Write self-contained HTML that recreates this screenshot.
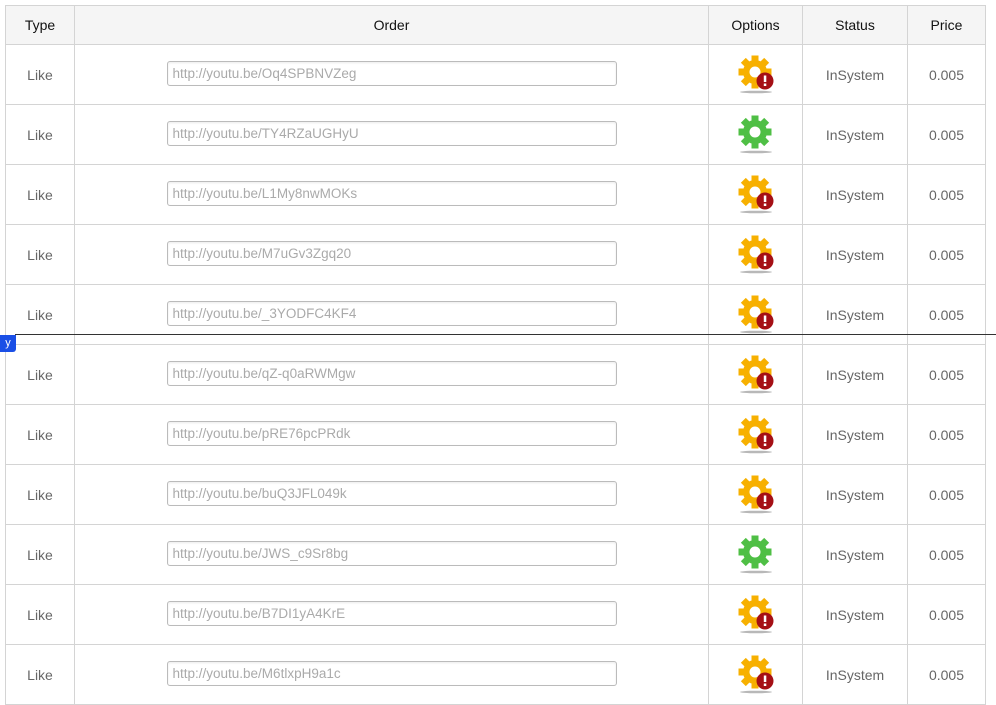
<!DOCTYPE html>
<html><head><meta charset="utf-8"><style>
body{margin:0;width:996px;height:698px;overflow:hidden;background:#fff;font-family:"Liberation Sans",Arial,sans-serif;position:relative}
table{position:absolute;left:5px;top:5px;border-collapse:collapse;table-layout:fixed;width:980px}
td,th{border:1px solid #d4d4d4;text-align:center;padding:0}
th{background:#f5f5f5;font-weight:normal;font-size:14px;color:#111;height:38px}
td{height:59px;font-size:14px;color:#666}
.inp{display:block;margin:-2px auto 0;text-align:left;font-size:13.5px;color:#aaa;line-height:23px;padding-left:5px;box-sizing:border-box;width:450px;height:25px;border:1px solid #bbb;border-radius:3px;box-shadow:inset 0 1px 2px rgba(0,0,0,.08)}
.hl{position:absolute;left:15px;right:0;top:334px;height:1px;background:#333}
.tag{position:absolute;left:0;top:335px;width:16px;height:17px;background:#1a4fe6;color:#fff;font-size:11px;line-height:17px;border-radius:0 0 3px 0;text-align:center}
svg{display:block;margin:0 auto}
</style></head><body>
<svg width="0" height="0" style="position:absolute"><defs>
<g id="teeth"><circle cx="0" cy="0" r="12"/><rect x="-3.5" y="-16.5" width="7" height="33"/><rect x="-3.5" y="-16.5" width="7" height="33" transform="rotate(45)"/><rect x="-3.5" y="-16.5" width="7" height="33" transform="rotate(90)"/><rect x="-3.5" y="-16.5" width="7" height="33" transform="rotate(135)"/></g>
<g id="gy"><ellipse cx="19" cy="37" rx="16" ry="1.3" fill="#888" opacity=".6"/><g transform="translate(18,17)" fill="#f7b000"><use href="#teeth"/><circle r="5.5" fill="#fff"/></g><circle cx="28" cy="26" r="8.5" fill="#a50f15"/><rect x="26.8" y="20.5" width="2.5" height="6.5" fill="#fff"/><rect x="26.8" y="28.5" width="2.5" height="2.5" fill="#fff"/></g>
<g id="gg"><ellipse cx="19" cy="37" rx="16" ry="1.3" fill="#888" opacity=".6"/><g transform="translate(18,17)" fill="#4fbf45"><use href="#teeth"/><circle r="5.5" fill="#fff"/></g></g>
</defs></svg>
<table>
<colgroup><col style="width:69px"><col style="width:634px"><col style="width:94px"><col style="width:105px"><col style="width:78px"></colgroup>
<tr><th>Type</th><th>Order</th><th>Options</th><th>Status</th><th>Price</th></tr>
<tr><td>Like</td><td><div class="inp">http://youtu.be/Oq4SPBNVZeg</div></td><td><svg width="38" height="40"><use href="#gy"/></svg></td><td>InSystem</td><td>0.005</td></tr>
<tr><td>Like</td><td><div class="inp">http://youtu.be/TY4RZaUGHyU</div></td><td><svg width="38" height="40"><use href="#gg"/></svg></td><td>InSystem</td><td>0.005</td></tr>
<tr><td>Like</td><td><div class="inp">http://youtu.be/L1My8nwMOKs</div></td><td><svg width="38" height="40"><use href="#gy"/></svg></td><td>InSystem</td><td>0.005</td></tr>
<tr><td>Like</td><td><div class="inp">http://youtu.be/M7uGv3Zgq20</div></td><td><svg width="38" height="40"><use href="#gy"/></svg></td><td>InSystem</td><td>0.005</td></tr>
<tr><td>Like</td><td><div class="inp">http://youtu.be/_3YODFC4KF4</div></td><td><svg width="38" height="40"><use href="#gy"/></svg></td><td>InSystem</td><td>0.005</td></tr>
<tr><td>Like</td><td><div class="inp">http://youtu.be/qZ-q0aRWMgw</div></td><td><svg width="38" height="40"><use href="#gy"/></svg></td><td>InSystem</td><td>0.005</td></tr>
<tr><td>Like</td><td><div class="inp">http://youtu.be/pRE76pcPRdk</div></td><td><svg width="38" height="40"><use href="#gy"/></svg></td><td>InSystem</td><td>0.005</td></tr>
<tr><td>Like</td><td><div class="inp">http://youtu.be/buQ3JFL049k</div></td><td><svg width="38" height="40"><use href="#gy"/></svg></td><td>InSystem</td><td>0.005</td></tr>
<tr><td>Like</td><td><div class="inp">http://youtu.be/JWS_c9Sr8bg</div></td><td><svg width="38" height="40"><use href="#gg"/></svg></td><td>InSystem</td><td>0.005</td></tr>
<tr><td>Like</td><td><div class="inp">http://youtu.be/B7DI1yA4KrE</div></td><td><svg width="38" height="40"><use href="#gy"/></svg></td><td>InSystem</td><td>0.005</td></tr>
<tr><td>Like</td><td><div class="inp">http://youtu.be/M6tlxpH9a1c</div></td><td><svg width="38" height="40"><use href="#gy"/></svg></td><td>InSystem</td><td>0.005</td></tr>
</table>
<div class="hl"></div>
<div class="tag">y</div>
</body></html>
